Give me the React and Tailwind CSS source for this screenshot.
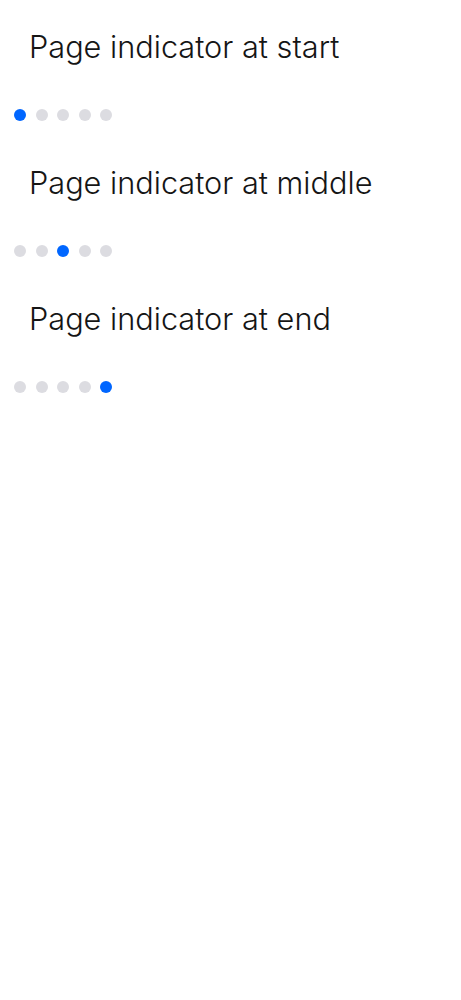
import React from "react";

function Dots({ active }) {
  return (
    <div className="flex items-center gap-[9.5px] h-[24px] pl-[14px]">
      {[0, 1, 2, 3, 4].map((i) =>
        i === active ? (
          <span key={i} className="block w-[12px] h-[12px] rounded-full bg-[#0066ff]" />
        ) : (
          <span key={i} className="block w-[12px] h-[12px] rounded-full bg-[#dcdce1]" />
        )
      )}
    </div>
  );
}

function Section({ title, active }) {
  return (
    <div className="flex flex-col">
      <div className="h-[103px] flex items-center pl-[29px] pb-[9px] text-[30.7px] font-light text-[#151515]" style={{ fontFamily: "Inter, sans-serif" }}>
        {title}
      </div>
      <Dots active={active} />
      <div className="h-[9px]" />
    </div>
  );
}

export default function App() {
  return (
    <div className="w-[461px] h-[1000px] bg-white">
      <Section title="Page indicator at start" active={0} />
      <Section title="Page indicator at middle" active={2} />
      <Section title="Page indicator at end" active={4} />
    </div>
  );
}
